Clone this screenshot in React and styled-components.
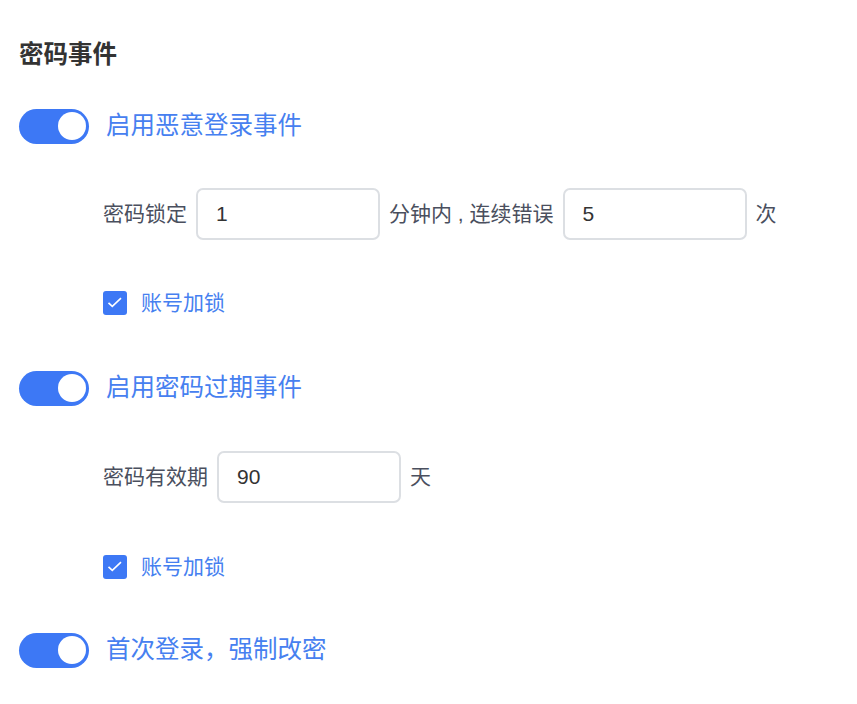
import React, { useState } from "react";
import styled, { createGlobalStyle } from "styled-components";

const GlobalStyle = createGlobalStyle`
  html, body {
    margin: 0;
    padding: 0;
    background: #fff;
  }
  body {
    font-family: "Liberation Sans", "Noto Sans CJK SC", sans-serif;
  }
`;

const Page = styled.div`
  padding: 40px 0 0 19px;
  display: flex;
  flex-direction: column;
`;

const Title = styled.h2`
  margin: 0;
  height: 30px;
  line-height: 30px;
  font-size: 24.5px;
  font-weight: 700;
  color: #333;
`;

const Section = styled.div`
  display: flex;
  flex-direction: column;
  margin-top: ${(p) => p.$top}px;
`;

const SwitchRow = styled.label`
  display: flex;
  align-items: center;
  height: 36px;
  gap: 17px;
  cursor: pointer;
`;

const Track = styled.span`
  position: relative;
  width: 70px;
  height: 35px;
  border-radius: 18px;
  background: ${(p) => (p.$on ? "#3d78f5" : "#c0c4cc")};
  transition: background 0.2s;
  flex-shrink: 0;
`;

const Knob = styled.span`
  position: absolute;
  top: 3.5px;
  left: ${(p) => (p.$on ? "39px" : "3px")};
  width: 28px;
  height: 28px;
  border-radius: 50%;
  background: #fff;
  transition: left 0.2s;
`;

const SwitchText = styled.span`
  font-size: 24.5px;
  line-height: 36px;
  color: #4680f0;
`;

const Body = styled.div`
  padding-left: 84px;
  display: flex;
  flex-direction: column;
`;

const FieldRow = styled.div`
  display: flex;
  align-items: center;
  height: 52px;
  margin-top: ${(p) => p.$top}px;
  font-size: 21px;
  color: #4a4f5e;
`;

const Text = styled.span`
  white-space: pre;
  line-height: 52px;
`;

const Input = styled.input`
  box-sizing: border-box;
  width: 184px;
  height: 52px;
  margin: 0 9px;
  padding: 0 18px;
  border: 2px solid #dcdfe3;
  border-radius: 7px;
  font-family: "Liberation Sans", "Noto Sans CJK SC", sans-serif;
  font-size: 21px;
  color: #333;
  outline: none;
  background: #fff;
`;

const CheckRow = styled.label`
  display: flex;
  align-items: center;
  gap: 14px;
  height: 24px;
  margin-top: ${(p) => p.$top}px;
  cursor: pointer;
`;

const Box = styled.span`
  position: relative;
  width: 24px;
  height: 24px;
  border-radius: 3px;
  background: #3d78f5;
  flex-shrink: 0;
`;

const CheckText = styled.span`
  font-size: 21px;
  line-height: 24px;
  color: #4680f0;
`;

function Toggle({ label }) {
  const [on, setOn] = useState(true);
  return (
    <SwitchRow onClick={() => setOn(!on)}>
      <Track $on={on}>
        <Knob $on={on} />
      </Track>
      <SwitchText>{label}</SwitchText>
    </SwitchRow>
  );
}

function Check({ top, label }) {
  return (
    <CheckRow $top={top}>
      <Box>
        <svg width="24" height="24" viewBox="0 0 24 24">
          <path d="M5.5 11.8 L9.3 15.4 L18 7.2" fill="none" stroke="#fff" strokeWidth="1.6" />
        </svg>
      </Box>
      <CheckText>{label}</CheckText>
    </CheckRow>
  );
}

export default function App() {
  return (
    <>
      <GlobalStyle />
      <Page>
        <Title>密码事件</Title>

        <Section $top={38}>
          <Toggle label="启用恶意登录事件" />
          <Body>
            <FieldRow $top={44}>
              <Text>密码锁定</Text>
              <Input defaultValue="1" />
              <Text>分钟内 , 连续错误</Text>
              <Input defaultValue="5" />
              <Text>次</Text>
            </FieldRow>
            <Check top={51} label="账号加锁" />
          </Body>
        </Section>

        <Section $top={55}>
          <Toggle label="启用密码过期事件" />
          <Body>
            <FieldRow $top={45}>
              <Text>密码有效期</Text>
              <Input defaultValue="90" />
              <Text>天</Text>
            </FieldRow>
            <Check top={52} label="账号加锁" />
          </Body>
        </Section>

        <Section $top={53}>
          <Toggle label="首次登录，强制改密" />
        </Section>
      </Page>
    </>
  );
}
